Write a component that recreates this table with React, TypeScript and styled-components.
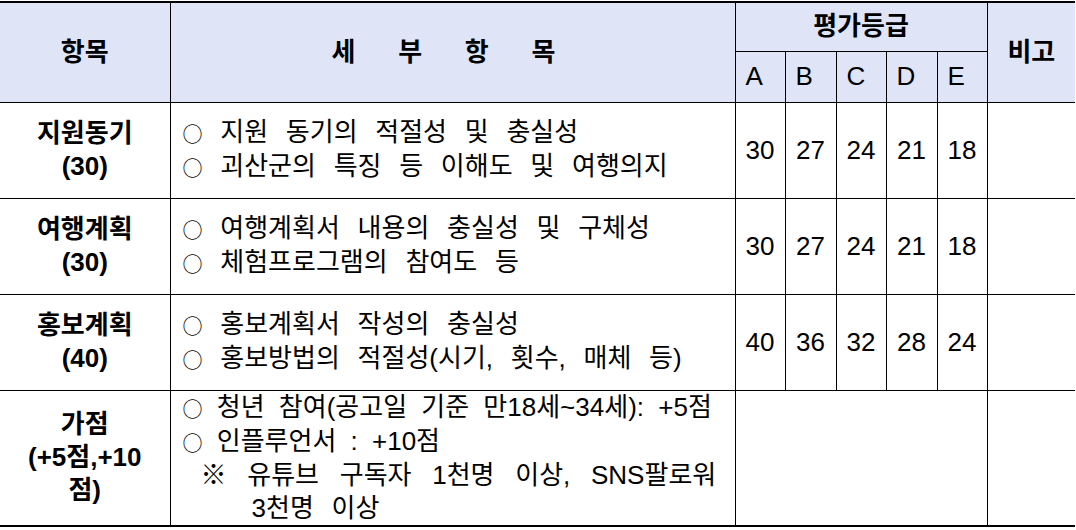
import React from 'react';
import styled, { createGlobalStyle } from 'styled-components';

/**
 * 평가 기준표 (evaluation criteria table)
 */
const GlobalStyle = createGlobalStyle`
  body {
    margin: 0;
    background: #fff;
    color: #000;
    font-family: 'Liberation Sans', 'Noto Sans CJK KR', sans-serif;
  }

  * {
    box-sizing: border-box;
  }
`;

const Page = styled.div`
  padding-top: 1px;
`;

const Table = styled.table`
  width: 1075px;
  table-layout: fixed;
  border-collapse: collapse;
  border-top: 2px solid #000;
  border-bottom: 2px solid #000;
  font-size: 26px;
  line-height: 33px;
`;

const HeadCell = styled.th`
  background: #dfe5f6;
  border: 1px solid #000;
  font-weight: 700;
  text-align: center;
  padding: 0;
  vertical-align: middle;

  &:first-child {
    border-left: none;
  }
  &:last-child {
    border-right: none;
  }
`;

const TitleCell = styled(HeadCell)`
  padding-right: 18px;
  word-spacing: 35.5px;
`;

const GradeLetter = styled(HeadCell)`
  font-weight: 400;
  text-align: left;
  padding: 0 10px;
`;

const Category = styled.td`
  border: 1px solid #000;
  border-left: none;
  text-align: center;
  font-weight: 700;
  vertical-align: middle;
  padding: 0 8px;
`;

// one line of the category label
const Label = styled.div`
  white-space: nowrap;
`;

const Detail = styled.td`
  border: 1px solid #000;
  padding: 0 12px;
  vertical-align: middle;
  word-spacing: 10.5px;
`;

const Line = styled.div<{ $indent?: number; $spacing?: number }>`
  padding-left: ${(p) => p.$indent ?? 0}px;
  white-space: nowrap;
  ${(p) => (p.$spacing ? `word-spacing: ${p.$spacing}px;` : '')}
`;

const Bullet = styled.span`
  display: inline-block;
  font-family: 'Noto Sans CJK KR', sans-serif;
  font-size: 20px;
  line-height: 33px;
  vertical-align: top;
  margin-top: 1px;
`;

const Score = styled.td`
  border: 1px solid #000;
  text-align: center;
  vertical-align: middle;
`;

const Note = styled.td`
  border: 1px solid #000;
  border-right: none;
`;

const Row = styled.tr<{ $h: number }>`
  height: ${(p) => p.$h}px;
`;

type Item = {
  name: string;
  points: string;
  lines: string[];
  scores: number[];
};

const items: Item[] = [
  {
    name: '지원동기',
    points: '(30)',
    lines: ['지원 동기의 적절성 및 충실성', '괴산군의 특징 등 이해도 및 여행의지'],
    scores: [30, 27, 24, 21, 18],
  },
  {
    name: '여행계획',
    points: '(30)',
    lines: ['여행계획서 내용의 충실성 및 구체성', '체험프로그램의 참여도 등'],
    scores: [30, 27, 24, 21, 18],
  },
  {
    name: '홍보계획',
    points: '(40)',
    lines: ['홍보계획서 작성의 충실성', '홍보방법의 적절성(시기, 횟수, 매체 등)'],
    scores: [40, 36, 32, 28, 24],
  },
];

const Point: React.FC<{ text: string; spacing?: number }> = ({ text, spacing }) => (
  <Line $spacing={spacing}>
    <Bullet>○</Bullet> {text}
  </Line>
);

const App: React.FC = () => {
  return (
    <>
      <GlobalStyle />
      <Page>
        <Table>
          <colgroup>
            <col style={{ width: 170 }} />
            <col style={{ width: 565 }} />
            <col style={{ width: 50 }} />
            <col style={{ width: 51 }} />
            <col style={{ width: 50 }} />
            <col style={{ width: 51 }} />
            <col style={{ width: 50 }} />
            <col style={{ width: 88 }} />
          </colgroup>
          <thead>
            <Row $h={49}>
              <HeadCell rowSpan={2}>항목</HeadCell>
              <TitleCell rowSpan={2}>세 부 항 목</TitleCell>
              <HeadCell colSpan={5}>평가등급</HeadCell>
              <HeadCell rowSpan={2}>비고</HeadCell>
            </Row>
            <Row $h={51}>
              {['A', 'B', 'C', 'D', 'E'].map((g) => (
                <GradeLetter key={g}>{g}</GradeLetter>
              ))}
            </Row>
          </thead>
          <tbody>
            {items.map((it) => (
              <Row $h={96} key={it.name}>
                <Category>
                  <Label>{it.name}</Label>
                  <Label>{it.points}</Label>
                </Category>
                <Detail>
                  {it.lines.map((l) => (
                    <Point key={l} text={l} />
                  ))}
                </Detail>
                {it.scores.map((s, i) => (
                  <Score key={i}>{s}</Score>
                ))}
                <Note />
              </Row>
            ))}
            <Row $h={135}>
              <Category>
                <Label>가점</Label>
                <Label>(+5점,+10</Label>
                <Label>점)</Label>
              </Category>
              <Detail>
                <Point text="청년 참여(공고일 기준 만18세~34세): +5점" spacing={7} />
                <Point text="인플루언서 : +10점" spacing={7} />
                <Line $indent={18} $spacing={13.5}>
                  ※ 유튜브 구독자 1천명 이상, SNS팔로워
                </Line>
                <Line $indent={69}>3천명 이상</Line>
              </Detail>
              <Score colSpan={5} />
              <Note />
            </Row>
          </tbody>
        </Table>
      </Page>
    </>
  );
};

export default App;
